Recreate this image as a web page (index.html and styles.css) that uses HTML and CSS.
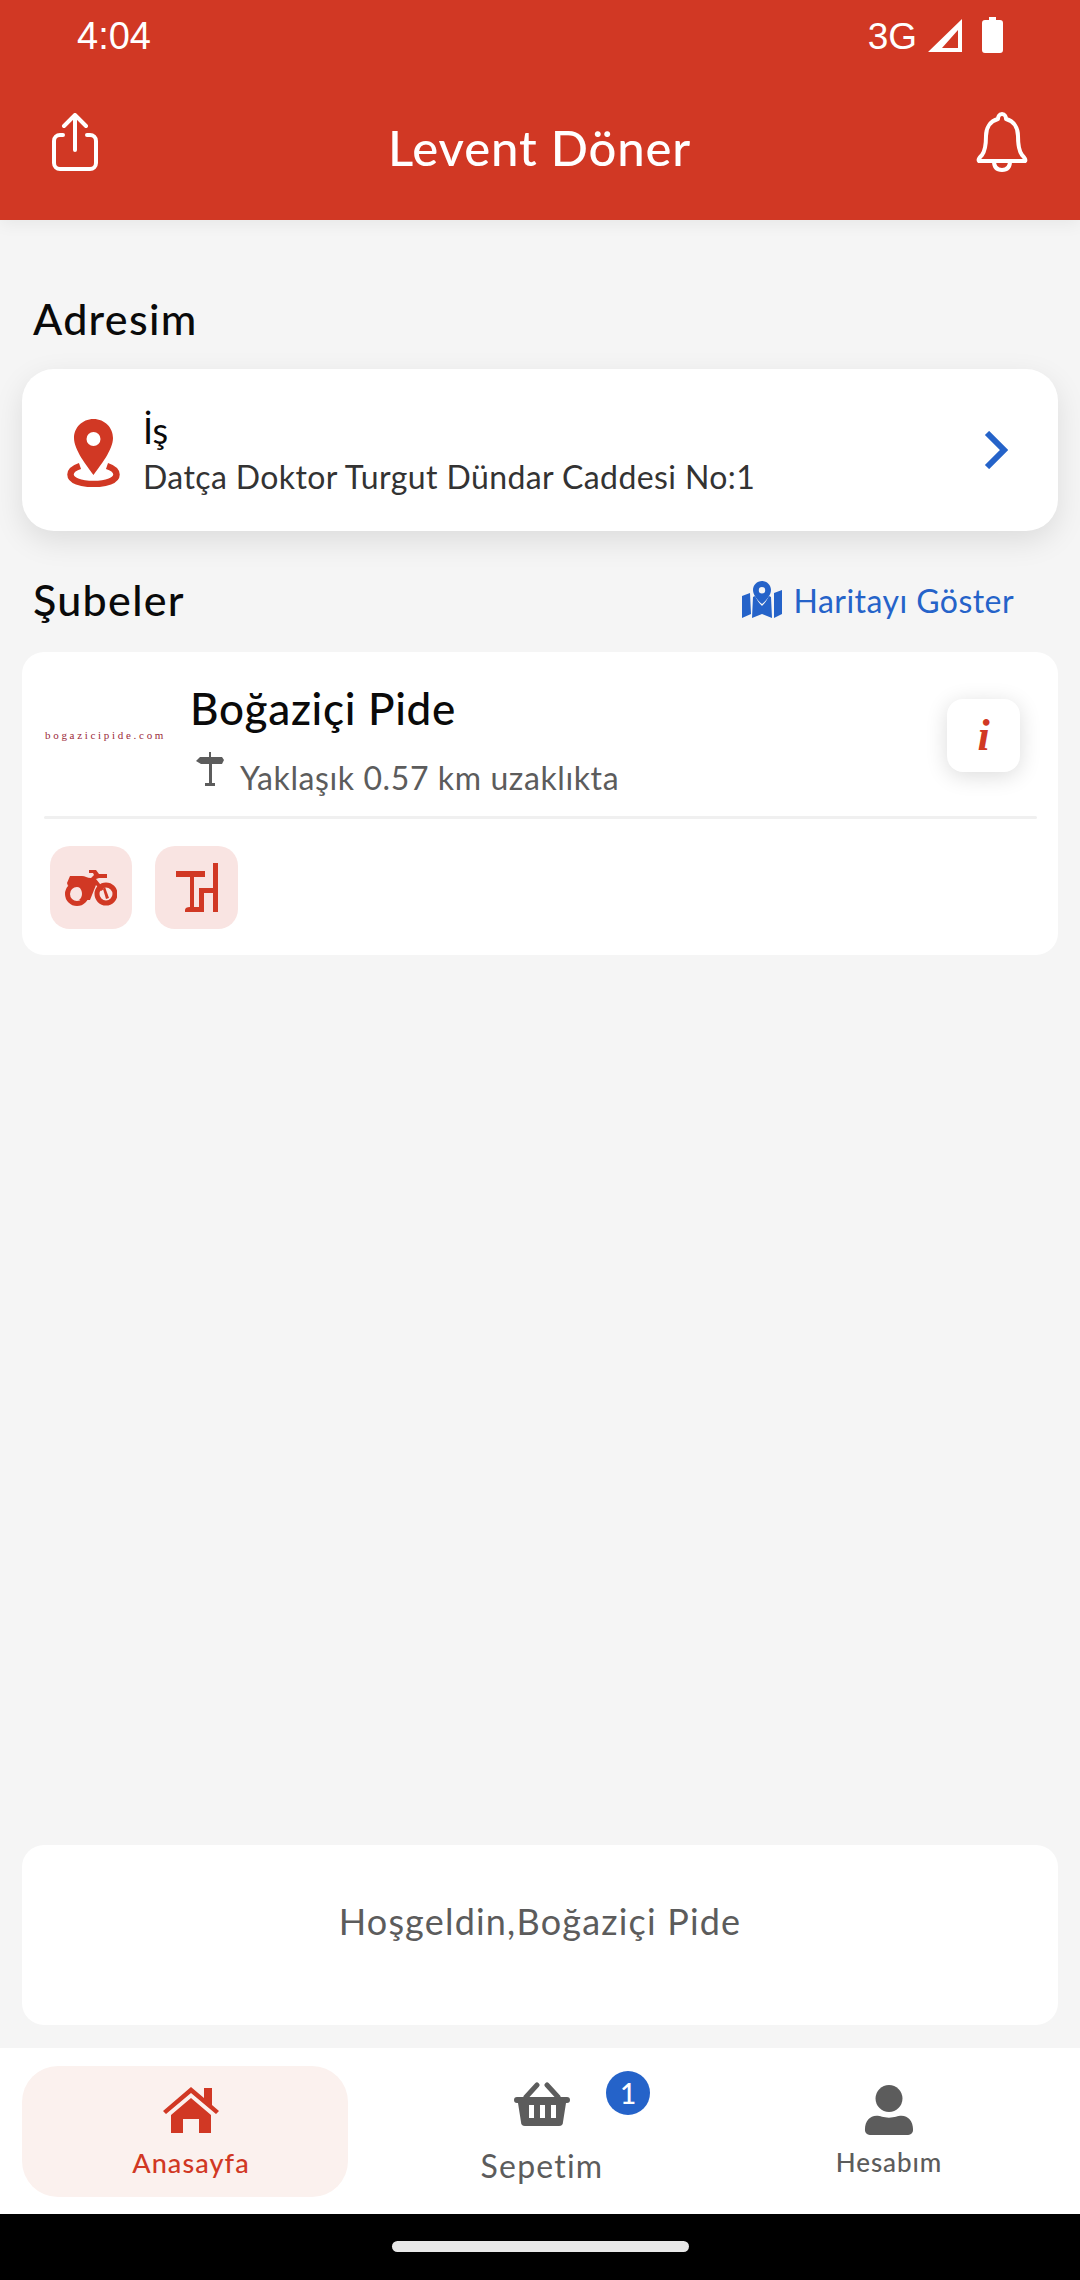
FILE: index.html
```html
<!DOCTYPE html>
<html lang="tr">
<head>
<meta charset="utf-8">
<title>Levent Döner</title>
<link rel="stylesheet" href="styles.css">
</head>
<body>
<div class="app">
  <header class="topbar">
    <div class="status">
      <span class="clock">4:04</span>
      <div class="status-right">
        <span class="net">3G</span>
        <svg class="sig" viewBox="0 0 34 33"><path d="M0 33 34 0v33z M14 29h16V11z" fill="#fff" fill-rule="evenodd"/></svg>
        <svg class="bat" viewBox="0 0 21 36"><path d="M7 0h7v3h4a3 3 0 0 1 3 3v27a3 3 0 0 1-3 3H3a3 3 0 0 1-3-3V6a3 3 0 0 1 3-3h4z" fill="#fff"/></svg>
      </div>
    </div>
    <div class="titlebar">
      <svg class="share" viewBox="0 0 46 58" fill="none" stroke="#fff" stroke-width="4" stroke-linecap="round" stroke-linejoin="round"><path d="M23 2v35M12 13 23 2l11 11"/><path d="M11 22H8a6 6 0 0 0-6 6v22a6 6 0 0 0 6 6h30a6 6 0 0 0 6-6V28a6 6 0 0 0-6-6h-3"/></svg>
      <h1 class="apptitle">Levent Döner</h1>
      <svg class="bell" viewBox="0 0 52 60" fill="none" stroke="#fff" stroke-width="4" stroke-linejoin="round"><path d="M26 2c3 0 4 3 4 5 8 2 12 9 12 17 0 10 1 15 4 19 3 3 4 5 3 6H3c-1-1 0-3 3-6 3-4 4-9 4-19 0-8 4-15 12-17 0-2 1-5 4-5z"/><path d="M18 49c0 6 3 9 8 9s8-3 8-9"/></svg>
    </div>
  </header>

  <main class="content">
    <h2 class="section-title adres-title">Adresim</h2>
    <section class="card address">
      <svg class="pin" viewBox="0 0 53 68"><path fill="#d13824" d="M26.500 0C15 0 7 9 7 19c0 12 13 28 19.500 37C33 47 46 31 46 19 46 9 38 0 26.500 0z"/><circle cx="26.500" cy="20" r="7" fill="#fff"/><path fill="none" stroke="#d13824" stroke-width="6.500" d="M13 47C7 49 3.500 52 3.500 55.500c0 6 10 9.500 23 9.500s23-3.500 23-9.500c0-3.500-3.500-6.500-9.500-8.500"/></svg>
      <div class="address-text">
        <div class="address-name">İş</div>
        <div class="address-line">Datça Doktor Turgut Dündar Caddesi No:1</div>
      </div>
      <svg class="chevron" viewBox="0 0 24 38" fill="none" stroke="#2563c9" stroke-width="6"><path d="M3 2l17 17L3 36"/></svg>
    </section>

    <div class="branch-head">
      <h2 class="section-title">Şubeler</h2>
      <div class="maplink">
        <svg class="mapicon" viewBox="0 0 40 38"><path fill="#2563c9" d="M0 15l8-3 1 21-9 4zM32 12l8-3v24l-8 4zM11 16l2-1c2 4 4 7 7 10 3-3 5-6 7-10l2 1 1 21-10-4-10 4z"/><path fill="#2563c9" fill-rule="evenodd" d="M20 0c5 0 9 4 9 9 0 5-5 11-9 14-4-3-9-9-9-14 0-5 4-9 9-9zm0 6a3.200 3.200 0 1 0 0 6.400A3.200 3.200 0 0 0 20 6z"/></svg>
        <span class="maptext">Haritayı Göster</span>
      </div>
    </div>

    <section class="card branch">
      <div class="branch-top">
        <div class="logo"><span class="logotext">bogazicipide.com</span></div>
        <div class="branch-info">
          <div class="branch-name">Boğaziçi Pide</div>
          <div class="branch-dist">
            <svg class="signpost" viewBox="0 0 28 34"><path fill="#5c5c5c" d="M13 0h2v5h11l2 3-2 4H16v19h3v3h-10v-3h4V12H5L0 9l4-4h9z"/></svg>
            <span>Yaklaşık 0.57 km uzaklıkta</span>
          </div>
        </div>
        <div class="infobtn"><span class="infoi">i</span></div>
      </div>
      <div class="divider"></div>
      <div class="tiles">
        <div class="tile">
          <svg class="moto" viewBox="0 0 52 38"><g fill="none" stroke="#d13824" stroke-width="5"><circle cx="12" cy="25" r="9.500"/><circle cx="41" cy="25" r="9"/></g><path fill="#d13824" d="M5 7h12c3 0 5 2 9 2l3-3-1-2h-4V1h7l3 4h8v4h-8l-3 1 8 10-3 2-5-6-6 15H14c4-3 4-9 0-13-3-2-7-3-11-1l-1-3z"/><path fill="#d13824" d="M40 18l4 11-3 1-3-10z"/></svg>
        </div>
        <div class="tile tile-wide">
          <svg class="table" viewBox="0 0 42 50"><path fill="#d13824" d="M0 8h29v6H18v30h6v5H9v-2c0-2 2-3 5-3V14H0zM37 0h5v49h-5V30h-9v19h-5V25h14z"/></svg>
        </div>
      </div>
    </section>

    <section class="card welcome">Hoşgeldin,Boğaziçi Pide</section>
  </main>

  <nav class="tabbar">
    <div class="tab tab-active">
      <svg class="home" viewBox="0 0 56 46"><path fill="#d13824" d="M0 24 28 0l13 11V1h8v17l7 6-3 3L28 6 3 27z"/><path fill="#d13824" fill-rule="evenodd" d="M28 11l20 17v18H36V32H20v14H8V28z"/></svg>
      <span class="tablabel tl-home">Anasayfa</span>
    </div>
    <div class="tab">
      <div class="basket-wrap">
        <svg class="basket" viewBox="0 0 56 44"><path fill="#5c5c5c" fill-rule="evenodd" d="M3 15h50a3 3 0 0 1 0 6h-1l-3 19a4 4 0 0 1-4 4H11a4 4 0 0 1-4-4L4 21H3a3 3 0 0 1 0-6zm12 8v13h5V23zm11 0v13h5V23zm11 0v13h5V23z"/><path stroke="#5c5c5c" stroke-width="5" stroke-linecap="round" d="M12 15 23 3M44 15 33 3" fill="none"/></svg>
        <span class="badge">1</span>
      </div>
      <span class="tablabel tl-cart">Sepetim</span>
    </div>
    <div class="tab">
      <svg class="person" viewBox="0 0 50 52"><circle cx="25" cy="14" r="14" fill="#5c5c5c"/><path fill="#5c5c5c" d="M12 32c4 0 7 2 13 2s9-2 13-2c7 0 12 6 12 14v1a5 5 0 0 1-5 5H5a5 5 0 0 1-5-5v-1c0-8 5-14 12-14z"/></svg>
      <span class="tablabel tl-acct">Hesabım</span>
    </div>
  </nav>

  <footer class="gesture"><div class="handle"></div></footer>
</div>
</body>
</html>
```

FILE: styles.css
```css
* { box-sizing: border-box; }
html, body { margin: 0; padding: 0; }
body { width: 1080px; height: 2280px; overflow: hidden; font-family: Lato, "Noto Sans", sans-serif; background: #f5f5f5; }
.app { height: 2280px; display: flex; flex-direction: column; }

.topbar { height: 220px; background: #d13824; color: #fff; display: flex; flex-direction: column; box-shadow: 0 4px 16px rgba(0,0,0,.06); position: relative; }
.status { height: 72px; display: flex; justify-content: space-between; align-items: center; padding: 0 77px 0 77px; }
.clock { font-family: "Liberation Sans", sans-serif; font-size: 38px; line-height: 72px; }
.status-right { display: flex; align-items: center; gap: 11px; }
.net { font-family: "Liberation Sans", sans-serif; font-size: 37px; line-height: 1; }
.sig { width: 34px; height: 33px; margin-top: -2px; }
.bat { width: 21px; height: 36px; margin-left: 9px; margin-top: -3px; }
.titlebar { flex: 1; display: flex; align-items: center; justify-content: space-between; padding: 0 52px; margin-top: -8px; }
.share { width: 46px; height: 58px; }
.bell { width: 52px; height: 60px; }
.apptitle { margin: 10px 0 0 5px; font-size: 49px; font-weight: 500; letter-spacing: .85px; line-height: 1; }

.content { flex: 1; display: flex; flex-direction: column; padding: 0 22px 23px; min-height: 0; }
.section-title { margin: 0; font-size: 43px; font-weight: 500; color: #0a0a0a; line-height: 48px; padding-left: 11px; letter-spacing: 1.3px; }
.adres-title { margin-top: 75px; }

.card { background: #fff; border-radius: 22px; }
.address { margin-top: 26px; height: 162px; border-radius: 32px; display: flex; align-items: center; padding: 0 50px 0 45px; box-shadow: 0 10px 30px rgba(0,0,0,.1); position: relative; }
.pin { width: 53px; height: 68px; flex: none; margin-top: 5px; }
.address-text { flex: 1; margin-left: 23px; padding-top: 7px; }
.address-name { font-size: 36px; color: #0a0a0a; line-height: 44px; }
.address-line { font-size: 32px; color: #333; line-height: 46px; letter-spacing: .4px; margin-top: 2px; }
.chevron { width: 24px; height: 38px; margin-top: -1px; }

.branch-head { display: flex; align-items: center; justify-content: space-between; margin-top: 42px; height: 54px; padding-right: 44px; }
.maplink { display: flex; align-items: center; gap: 12px; color: #2563c9; }
.mapicon { width: 40px; height: 38px; }
.maptext { font-size: 32px; letter-spacing: .45px; }

.branch { margin-top: 25px; height: 303px; padding: 0 21px 0 22px; }
.branch-top { height: 164px; display: flex; position: relative; }
.logo { width: 146px; flex: none; display: flex; align-items: center; }
.logotext { font-family: "Liberation Serif", serif; font-size: 11px; color: #9c2a3a; letter-spacing: 2.7px; white-space: nowrap; padding: 2px 0 0 1px; }
.branch-info { flex: 1; padding-top: 30px; }
.branch-name { font-size: 44px; color: #0a0a0a; font-weight: 500; line-height: 52px; letter-spacing: .7px; }
.branch-dist { display: flex; align-items: flex-start; margin-top: 25px; margin-left: 6px; font-size: 32px; color: #5c5c5c; letter-spacing: .6px; line-height: 38px; }
.signpost { width: 28px; height: 34px; margin-top: -7px; }
.branch-dist span { margin-left: 16px; }
.infobtn { position: absolute; right: 17px; top: 47px; width: 73px; height: 73px; border-radius: 16px; background: #fff; box-shadow: 0 4px 22px rgba(0,0,0,.14); display: flex; align-items: center; justify-content: center; }
.infoi { font-family: "Liberation Serif", serif; font-style: italic; font-weight: 700; font-size: 44px; color: #d13824; line-height: 1; }
.divider { height: 3px; background: #f0f0f0; border-radius: 2px; }
.tiles { display: flex; gap: 23px; padding: 27px 6px 0; }
.tile { width: 82px; height: 83px; border-radius: 20px; background: #f9e4e2; display: flex; align-items: center; justify-content: center; }
.tile-wide { width: 83px; }
.moto { width: 52px; height: 38px; }
.table { width: 42px; height: 50px; }

.welcome { margin-top: auto; height: 180px; display: flex; align-items: center; justify-content: center; font-size: 36px; color: #5c5c5c; padding-bottom: 28px; letter-spacing: 1.2px; }

.tabbar { height: 166px; background: #fff; display: grid; grid-template-columns: 346px 348px 346px; padding: 18px 18px 17px 22px; }
.tab { display: flex; flex-direction: column; align-items: center; position: relative; }
.tab-active { background: #fbf1ee; border-radius: 36px; margin-right: 20px; padding-left: 12px; }
.home { width: 56px; height: 46px; margin-top: 21px; }
.tablabel { color: #5c5c5c; }
.tl-home { font-size: 27px; color: #d13824; margin-top: 14px; letter-spacing: 1.1px; line-height: 32px; font-weight: 500; }
.basket-wrap { margin-top: 16px; position: relative; }
.basket { display: block; width: 56px; height: 44px; }
.badge { position: absolute; left: 92px; top: -11px; width: 44px; height: 44px; border-radius: 50%; background: #2563c9; color: #fff; font-size: 28px; font-weight: 500; display: flex; align-items: center; justify-content: center; }
.tl-cart { font-size: 32px; margin-top: 20px; line-height: 40px; letter-spacing: 1.2px; }
.person { width: 50px; height: 50px; margin-top: 19px; }
.tl-acct { font-size: 26px; margin-top: 11px; line-height: 32px; letter-spacing: .9px; font-weight: 500; }

.gesture { height: 66px; background: #000; display: flex; justify-content: center; padding-top: 27px; }
.handle { width: 297px; height: 11px; border-radius: 6px; background: #e8e8e8; }
```
